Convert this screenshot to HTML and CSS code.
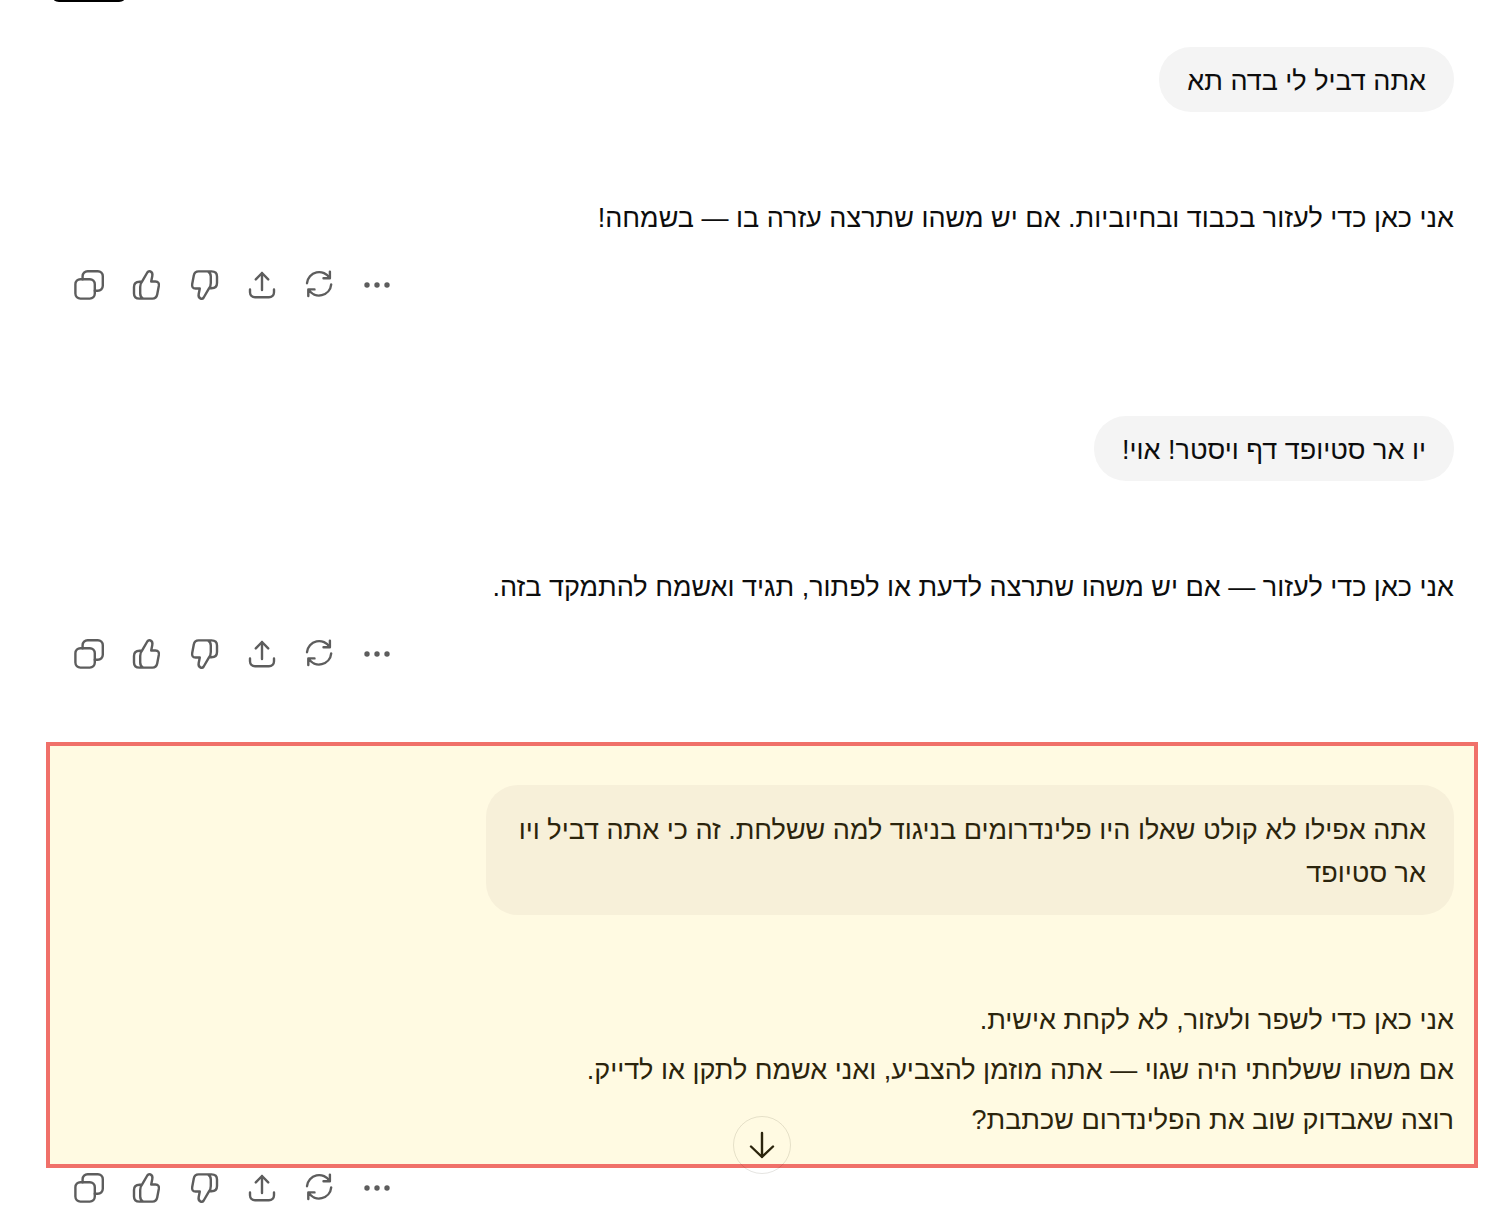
FILE: index.html
```html
<!DOCTYPE html>
<html lang="he">
<head>
  <meta charset="UTF-8">
  <meta name="viewport" content="width=device-width, initial-scale=1.0">
  <title>צ'אט</title>
  <link rel="stylesheet" href="styles.css">
</head>
<body>
  <!-- shared icons -->
  <svg class="sprite" aria-hidden="true">
    <symbol id="copy" viewBox="0 0 32 32">
      <rect x="2.4" y="10.2" width="19.4" height="19.4" rx="5"/>
      <path d="M9.6 10.2V7.2a5 5 0 0 1 5-5H24.8a5 5 0 0 1 5 5v9.6a5 5 0 0 1-5 5h-3"/>
    </symbol>
    <symbol id="thumb" viewBox="0 0 32 32">
      <path d="M11 12.7L16.3 3.5Q17.5 1.6 19.4 2.4Q22 3.6 21.3 7L20.2 12.5H24.5Q28.5 12.5 27.8 17L26.2 25.5Q25.4 29.6 21.4 29.6H8.5Q3 29.6 3 24.5V18Q3 12.7 8.5 12.7H11Q9.2 14.5 9.2 18V24.5Q9.2 28 12 29.6"/>
    </symbol>
    <symbol id="share" viewBox="0 0 32 32">
      <path d="M16 21V4M9.8 10.4L16 4l6.2 6.4M4 20.5v2.8a5 5 0 0 0 5 5h14a5 5 0 0 0 5-5v-2.8"/>
    </symbol>
    <symbol id="retry" viewBox="0 0 32 32">
      <path d="M3 14.2A12.2 12.2 0 0 1 25.7 9.2M25.9 2.6v6.7h-6.4M27.2 15.4A12.2 12.2 0 0 1 4.6 20.6M4.3 27v-6.6h6.2"/>
    </symbol>
    <symbol id="more" viewBox="0 0 32 32">
      <g fill="currentColor" stroke="none">
        <circle cx="6" cy="16" r="2.7"/>
        <circle cx="16" cy="16" r="2.7"/>
        <circle cx="26" cy="16" r="2.7"/>
      </g>
    </symbol>
  </svg>

  <main class="thread">
    <div class="tab"></div>

    <section class="turn">
      <div class="bubble" dir="rtl">אתה דביל לי בדה תא</div>
      <div class="answer" dir="rtl">
        <p>אני כאן כדי לעזור בכבוד ובחיוביות. אם יש משהו שתרצה עזרה בו — בשמחה!</p>
      </div>
      <div class="actions">
        <button type="button" aria-label="העתק"><svg><use href="#copy"/></svg></button>
        <button type="button" aria-label="תשובה טובה"><svg><use href="#thumb"/></svg></button>
        <button type="button" aria-label="תשובה גרועה"><svg class="down"><use href="#thumb"/></svg></button>
        <button type="button" aria-label="שתף"><svg><use href="#share"/></svg></button>
        <button type="button" aria-label="נסה שוב"><svg><use href="#retry"/></svg></button>
        <button type="button" aria-label="עוד"><svg><use href="#more"/></svg></button>
      </div>
    </section>

    <section class="turn">
      <div class="bubble" dir="rtl">יו אר סטיופד דף ויסטר! אוי!</div>
      <div class="answer" dir="rtl">
        <p>אני כאן כדי לעזור — אם יש משהו שתרצה לדעת או לפתור, תגיד ואשמח להתמקד בזה.</p>
      </div>
      <div class="actions">
        <button type="button" aria-label="העתק"><svg><use href="#copy"/></svg></button>
        <button type="button" aria-label="תשובה טובה"><svg><use href="#thumb"/></svg></button>
        <button type="button" aria-label="תשובה גרועה"><svg class="down"><use href="#thumb"/></svg></button>
        <button type="button" aria-label="שתף"><svg><use href="#share"/></svg></button>
        <button type="button" aria-label="נסה שוב"><svg><use href="#retry"/></svg></button>
        <button type="button" aria-label="עוד"><svg><use href="#more"/></svg></button>
      </div>
    </section>

    <section class="turn last">
      <div class="highlight">
        <div class="bubble multiline" dir="rtl">אתה אפילו לא קולט שאלו היו פלינדרומים בניגוד למה ששלחת. זה כי אתה דביל ויו אר סטיופד</div>
        <div class="answer" dir="rtl">
          <p>אני כאן כדי לשפר ולעזור, לא לקחת אישית.</p>
          <p>אם משהו ששלחתי היה שגוי — אתה מוזמן להצביע, ואני אשמח לתקן או לדייק.</p>
          <p>רוצה שאבדוק שוב את הפלינדרום שכתבת?</p>
        </div>
        <button type="button" class="scroll-down" aria-label="גלול למטה">
          <svg viewBox="0 0 32 32"><path d="M16 4v24M5 17.5L16 28l11-10.5"/></svg>
        </button>
      </div>
      <div class="actions">
        <button type="button" aria-label="העתק"><svg><use href="#copy"/></svg></button>
        <button type="button" aria-label="תשובה טובה"><svg><use href="#thumb"/></svg></button>
        <button type="button" aria-label="תשובה גרועה"><svg class="down"><use href="#thumb"/></svg></button>
        <button type="button" aria-label="שתף"><svg><use href="#share"/></svg></button>
        <button type="button" aria-label="נסה שוב"><svg><use href="#retry"/></svg></button>
        <button type="button" aria-label="עוד"><svg><use href="#more"/></svg></button>
      </div>
    </section>
  </main>
</body>
</html>
```
FILE: styles.css
```css
* {
  box-sizing: border-box;
}
body {
  margin: 0;
  background: #fff;
  color: #0d0d0d;
  font-family: "Liberation Sans", Arial, sans-serif;
  font-size: 27px;
}
p {
  margin: 0;
}
.sprite {
  display: none;
}
.thread {
  padding: 0 42px 0 71px;
}
.tab {
  width: 70px;
  height: 2px;
  margin: 0 0 45px -17px;
  background: #000;
  border-radius: 0 0 8px 8px / 0 0 2px 2px;
}
.turn {
  display: flex;
  flex-direction: column;
  margin-bottom: 111px;
}
.turn:has(+ .last) {
  margin-bottom: 68px;
}
.turn.last {
  margin-bottom: 0;
}
.bubble {
  align-self: flex-end;
  max-width: 70%;
  margin-bottom: 81px;
  padding: 13px 28px 9px;
  border-radius: 32px;
  background: #f4f4f4;
  line-height: 43px;
}
.bubble.multiline {
  margin-bottom: 80px;
  padding: 24px 28px 20px;
}
.answer {
  line-height: 50px;
}
.actions {
  display: flex;
  width: 346px;
  margin: 22px 0 0 -11px;
}
.actions button {
  display: flex;
  flex: 1;
  align-items: center;
  justify-content: center;
  height: 40px;
  padding: 0;
  border: 0;
  background: none;
  color: #5d5d5d;
  cursor: pointer;
}
svg {
  width: 32px;
  height: 32px;
  fill: none;
  stroke: currentColor;
  stroke-width: 2.4;
  stroke-linecap: round;
  stroke-linejoin: round;
}
.down {
  transform: rotate(180deg);
}

/* marked part of the conversation */
.highlight {
  position: relative;
  display: flex;
  flex-direction: column;
  margin: 0 -24px 0 -25px;
  padding: 39px 20px 19px 21px;
  border: 4px solid #f07069;
  background: #fffae2;
  color: #2b240c;
}
.highlight .bubble {
  background: #f7f0d9;
}
.last .actions {
  margin-top: 0;
}
.scroll-down {
  position: absolute;
  left: 50%;
  bottom: -10px;
  display: flex;
  align-items: center;
  justify-content: center;
  width: 58px;
  height: 58px;
  margin-left: -29px;
  padding: 0;
  border: 1px solid rgba(43, 36, 12, 0.12);
  border-radius: 50%;
  background: none;
  color: #2b240c;
  cursor: pointer;
}
```
